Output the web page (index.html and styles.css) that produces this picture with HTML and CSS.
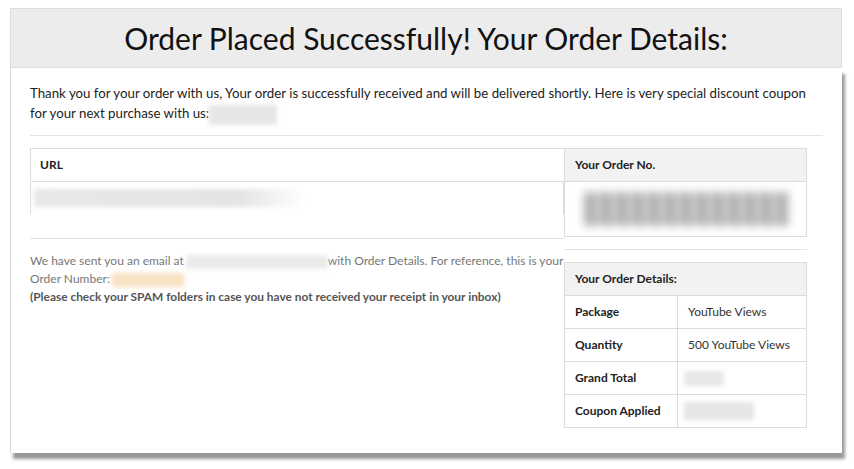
FILE: index.html
```html
<!DOCTYPE html>
<html lang="en">
<head>
    <meta charset="UTF-8">
    <meta name="viewport" content="width=device-width, initial-scale=1.0">
    <title>Order Placed</title>
    <link rel="stylesheet" href="styles.css">
</head>
<body>
    <div class="page">
        <header class="page-header">
            <h1>Order Placed Successfully! Your Order Details:</h1>
        </header>

        <div class="panel">
            <p class="intro">Thank you for your order with us, Your order is successfully received and will be delivered shortly. Here is very special discount coupon for your next purchase with us:<span class="blur blur-coupon"></span></p>
            <hr class="rule">

            <div class="columns">
                <div class="col-left">
                    <table class="url-table">
                        <thead>
                            <tr><th>URL</th></tr>
                        </thead>
                        <tbody>
                            <tr><td><span class="blur blur-url"></span></td></tr>
                        </tbody>
                    </table>
                    <hr class="rule rule-left">
                    <p class="note">We have sent you an email at<span class="blur blur-email"></span>with Order Details. For reference, this is your Order Number:<span class="blur blur-number"></span></p>
                    <p class="spam">(Please check your SPAM folders in case you have not received your receipt in your inbox)</p>
                </div>

                <div class="col-right">
                    <table class="box-table">
                        <thead>
                            <tr><th>Your Order No.</th></tr>
                        </thead>
                        <tbody>
                            <tr><td class="order-no"><span class="blur blur-order"></span></td></tr>
                        </tbody>
                    </table>
                    <hr class="rule rule-right">
                    <table class="box-table details">
                        <thead>
                            <tr><th colspan="2">Your Order Details:</th></tr>
                        </thead>
                        <tbody>
                            <tr><td class="label">Package</td><td>YouTube Views</td></tr>
                            <tr><td class="label">Quantity</td><td>500 YouTube Views</td></tr>
                            <tr><td class="label">Grand Total</td><td><span class="blur blur-total"></span></td></tr>
                            <tr><td class="label">Coupon Applied</td><td><span class="blur blur-applied"></span></td></tr>
                        </tbody>
                    </table>
                </div>
            </div>
        </div>
    </div>
</body>
</html>
```

FILE: styles.css
```css
body {
    font-family: Lato, "Open Sans", sans-serif;
    background-color: #ffffff;
    margin: 0;
    padding: 0 0 12px 0;
    color: #222;
}

.page {
    width: 832px;
    margin: 8px 0 0 10px;
}

.page-header {
    background-color: #ececec;
    border: 1px solid #dcdcdc;
    height: 58px;
    text-align: center;
}

.page-header h1 {
    margin: 0;
    font-size: 30px;
    font-weight: 400;
    line-height: 58px;
    color: #111;
}

.panel {
    background-color: #fff;
    border-left: 1px solid #d8d8d8;
    box-shadow: 3px 6px 3px rgba(0, 0, 0, 0.4);
    height: 385px;
    padding: 15px 19px 0 19px;
    box-sizing: border-box;
}

.intro {
    margin: 0;
    font-size: 13.25px;
    line-height: 20px;
    color: #222;
}

.rule {
    border: 0;
    border-top: 1px solid #e2e2e2;
    margin: 10px 0 12px 0;
}

.columns {
    display: flex;
}

.col-left {
    width: 534px;
}

.col-right {
    width: 243px;
}

table {
    width: 100%;
    border-collapse: collapse;
    font-size: 12px;
}

.url-table th {
    text-align: left;
    border: 1px solid #dcdcdc;
    border-right: 0;
    height: 32px;
    padding: 0 9px;
    font-weight: bold;
    color: #222;
}

.url-table td {
    border-left: 1px solid #dcdcdc;
    border-right: 1px solid #dcdcdc;
    height: 32px;
    padding: 0 3px;
}

.rule-left {
    margin: 24px 0 13px 0;
}

.note {
    margin: 0;
    font-size: 12px;
    line-height: 18px;
    color: #777;
}

.spam {
    margin: 0;
    font-size: 11.9px;
    line-height: 18px;
    font-weight: bold;
    color: #555;
}

.box-table th {
    background-color: #f2f2f2;
    border: 1px solid #dcdcdc;
    text-align: left;
    height: 32px;
    padding: 0 10px;
    font-weight: bold;
    color: #222;
}

.box-table td {
    border: 1px solid #dcdcdc;
    height: 32px;
    padding: 0 10px;
    color: #333;
}

.order-no {
    height: 54px !important;
    text-align: center;
}

.rule-right {
    margin: 12px 0 12px 0;
}

.details td.label {
    width: 92px;
    font-weight: bold;
    color: #222;
}

.blur {
    display: inline-block;
    vertical-align: middle;
    filter: blur(2px);
}

.blur-coupon {
    width: 68px;
    height: 20px;
    background-color: #e6e6e6;
}

.blur-url {
    width: 272px;
    height: 18px;
    background: linear-gradient(90deg, #e8e8e8 0%, #e4e4e4 75%, #fff 100%);
}

.blur-email {
    width: 142px;
    height: 14px;
    margin-left: 2px;
    background-color: #ebebeb;
}

.blur-number {
    width: 72px;
    height: 14px;
    margin-left: 2px;
    background-color: #f7e2c4;
}

.blur-order {
    width: 206px;
    height: 34px;
    background: repeating-linear-gradient(90deg, #c9c9c9 0px, #a8a8a8 8px, #d8d8d8 16px);
    filter: blur(4px);
}

.blur-total {
    width: 40px;
    height: 15px;
    background-color: #e8e8e8;
    margin-left: -4px;
}

.blur-applied {
    width: 70px;
    height: 18px;
    background-color: #e6e6e6;
    margin-left: -4px;
}
```
